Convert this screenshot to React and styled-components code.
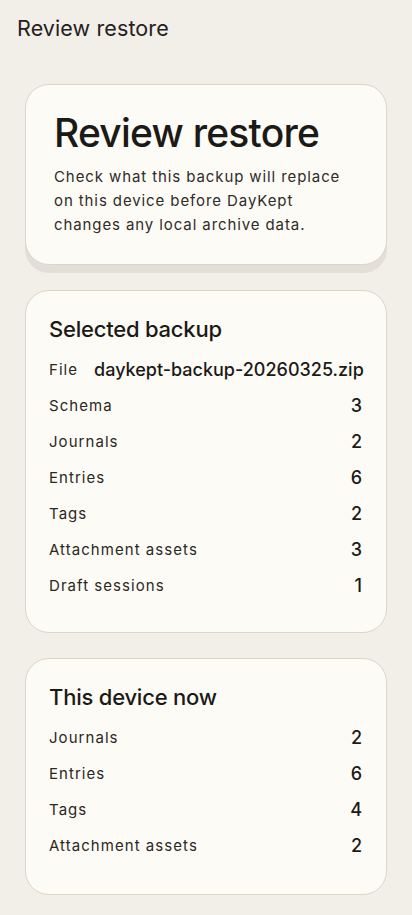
import React from "react";
import styled, { createGlobalStyle } from "styled-components";

const GlobalStyle = createGlobalStyle`
  html, body {
    margin: 0;
    padding: 0;
    background: #f2eee8;
  }
  body {
    font-family: Inter, "Noto Sans", sans-serif;
    color: #1f1c19;
  }
`;

const Page = styled.div`
  min-height: 915px;
  box-sizing: border-box;
  padding: 15px 25px 22px;
  display: flex;
  flex-direction: column;
`;

const TopBar = styled.div`
  margin: 0 -8px 0;
  font-size: 21.5px;
  line-height: 26px;
  font-weight: 400;
  letter-spacing: 0.005em;
  color: #24211e;
`;

const Stack = styled.div`
  margin-top: 43px;
  display: flex;
  flex-direction: column;
  gap: 25px;
`;

const Card = styled.section`
  background: #fdfbf6;
  border: 1px solid #ddd5c8;
  border-radius: 24px;
  box-sizing: border-box;
  padding: ${p => (p.hero ? "26px 28px 27px" : `24px 24px ${p.$bottom}px 23px`)};
  box-shadow: ${p => (p.hero ? "0 8px 0 #e3dfd8" : "none")};
`;

const HeroTitle = styled.h1`
  margin: 0;
  font-size: 39px;
  line-height: 44px;
  font-weight: 500;
  letter-spacing: -0.02em;
  color: #1c1a17;
`;

const HeroText = styled.p`
  margin: 10px 0 0;
  font-size: 15px;
  line-height: 24px;
  letter-spacing: 0.06em;
  color: #2f2b27;
`;

const CardTitle = styled.h2`
  margin: 0 0 8px;
  font-size: 22px;
  line-height: 28px;
  font-weight: 500;
  letter-spacing: -0.01em;
  color: #1c1a17;
`;

const Row = styled.div`
  height: 36px;
  display: flex;
  align-items: center;
  justify-content: space-between;
  gap: 16px;
`;

const Label = styled.span`
  font-size: 15px;
  letter-spacing: 0.07em;
  color: #2b2723;
  white-space: nowrap;
`;

const Value = styled.span`
  font-size: 18px;
  font-weight: 500;
  color: #1c1a17;
  white-space: nowrap;
`;

const backup = [
  ["File", "daykept-backup-20260325.zip"],
  ["Schema", "3"],
  ["Journals", "2"],
  ["Entries", "6"],
  ["Tags", "2"],
  ["Attachment assets", "3"],
  ["Draft sessions", "1"]
];

const device = [
  ["Journals", "2"],
  ["Entries", "6"],
  ["Tags", "4"],
  ["Attachment assets", "2"]
];

const Summary = ({ title, rows, bottom }) => (
  <Card $bottom={bottom}>
    <CardTitle>{title}</CardTitle>
    {rows.map(([label, value]) => (
      <Row key={label}>
        <Label>{label}</Label>
        <Value>{value}</Value>
      </Row>
    ))}
  </Card>
);

export default function App() {
  return (
    <>
      <GlobalStyle />
      <Page>
        <TopBar>Review restore</TopBar>
        <Stack>
          <Card hero>
            <HeroTitle>Review restore</HeroTitle>
            <HeroText>
              Check what this backup will replace on this device before DayKept
              changes any local archive data.
            </HeroText>
          </Card>
          <Summary title="Selected backup" rows={backup} bottom={29} />
          <Summary title="This device now" rows={device} bottom={31} />
        </Stack>
      </Page>
    </>
  );
}
